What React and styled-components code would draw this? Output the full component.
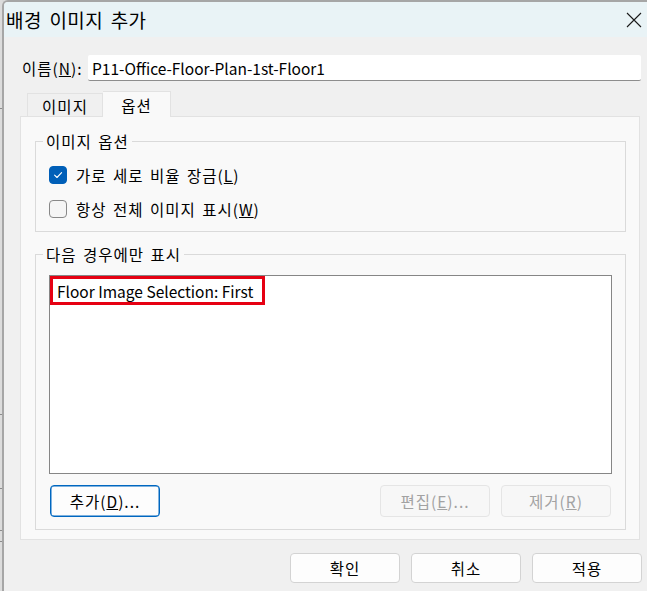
import React from 'react';
import styled, { createGlobalStyle } from 'styled-components';

const GlobalStyle = createGlobalStyle`
  html, body {
    margin: 0;
    padding: 0;
    background: #d9d9d9;
  }
  body {
    font-family: "Noto Sans CJK KR", "Noto Sans", sans-serif;
    color: #000;
  }
  * {
    box-sizing: border-box;
  }
`;

// ===== Frame =====
const Screen = styled.div`
  display: flex;
  width: 647px;
  height: 591px;
  overflow: hidden;
  background: #d9d9d9;
`;

// sliver of the window that sits behind the dialog
const BackStrip = styled.div`
  flex: none;
  width: 2px;
  background-color: #dcdcdc;
  background-image:
    linear-gradient(#8c8c8c, #8c8c8c),
    linear-gradient(#8c8c8c, #8c8c8c),
    linear-gradient(#8c8c8c, #8c8c8c),
    linear-gradient(#8c8c8c, #8c8c8c),
    linear-gradient(#8c8c8c, #8c8c8c);
  background-repeat: no-repeat;
  background-size: 2px 1px;
  background-position: 0 108px, 0 414px, 0 488px, 0 530px, 0 541px;
`;

const Dialog = styled.div`
  flex: 1;
  display: flex;
  flex-direction: column;
  border-left: 2px solid #a6a6a6;
  border-top: 2px solid #a6a6a6;
  border-top-left-radius: 6px;
  background: #f0f0f0;
  overflow: hidden;
`;

const TitleBar = styled.div`
  flex: none;
  height: 35px;
  display: flex;
  align-items: center;
  justify-content: space-between;
  padding: 0 5px 0 2px;
  background: #e9f3f6;
`;

const Title = styled.div`
  font-size: 19px;
  letter-spacing: 0.4px;
  word-spacing: 3px;
  line-height: 1;
`;

const CloseButton = styled.button`
  appearance: none;
  border: 0;
  background: transparent;
  padding: 0;
  width: 16px;
  height: 16px;
  display: grid;
  place-items: center;
`;

const Body = styled.div`
  display: flex;
  flex-direction: column;
  padding: 18px 6px 0 16px;
`;

// Korean UI labels are set a little looser, like the system font
const Text = styled.span`
  font-size: 15.5px;
  letter-spacing: 1px;
  word-spacing: 2px;
  white-space: nowrap;
`;

// ===== Name field =====
const NameRow = styled.div`
  display: flex;
  align-items: center;
  height: 26px;
  padding-left: 2px;
`;

const NameLabel = styled.label`
  flex: none;
  width: 66px;
`;

const TextInput = styled.input`
  flex: 1;
  min-width: 0;
  height: 26px;
  border: 0;
  border-bottom: 1px solid #8d8d8d;
  border-radius: 2px;
  background: #fff;
  padding: 0 4px;
  font-family: inherit;
  font-size: 15.5px;
  color: #000;
  outline: none;
`;

// ===== Tabs =====
const TabStrip = styled.div`
  display: flex;
  align-items: flex-start;
  height: 26px;
  margin-top: 10px;
  margin-bottom: -1px;
  padding-left: 7px;
  position: relative;
  z-index: 1;
`;

const Tab = styled.div`
  width: ${p => p.$w}px;
  height: ${p => (p.$active ? 26 : 24)}px;
  margin-top: ${p => (p.$active ? 0 : 2)}px;
  display: flex;
  align-items: center;
  justify-content: center;
  background: ${p => (p.$active ? '#f9f9f9' : '#f0f0f0')};
  border: 1px solid #e2e2e2;
  border-bottom: ${p => (p.$active ? '0' : '1px solid #e2e2e2')};
  border-left: ${p => (p.$active ? '0' : '1px solid #e2e2e2')};
  padding-top: ${p => (p.$active ? 0 : 1)}px;
`;

const TabPanel = styled.div`
  display: flex;
  flex-direction: column;
  margin-right: 1px;
  padding: 14px 13px 9px 14px;
  background: #f9f9f9;
  border: 1px solid #e2e2e2;
`;

// ===== Group boxes =====
const GroupBox = styled.fieldset`
  margin: ${p => p.$mt || 0}px 0 0 0;
  padding: ${p => p.$pad};
  border: 1px solid #dadada;
  min-width: 0;
`;

const Legend = styled.legend`
  margin-left: -6px;
  padding: 0 3px;
  line-height: 20px;
`;

const CheckRow = styled.label`
  display: flex;
  align-items: center;
  gap: 9px;
  height: 34px;
`;

const CheckBox = styled.span`
  flex: none;
  width: 18px;
  height: 18px;
  border-radius: 4px;
  display: grid;
  place-items: center;
  background: ${p => (p.$checked ? '#005fb8' : '#f5f5f5')};
  border: 1px solid ${p => (p.$checked ? '#005fb8' : '#888888')};
`;

const ListBox = styled.div`
  height: 199px;
  background: #fff;
  border: 1px solid #868686;
`;

const ListItem = styled.div`
  width: 215px;
  height: 29px;
  display: flex;
  align-items: center;
  padding-left: 4px;
  border: 3px solid #e60012;
  font-size: 15.5px;
`;

// ===== Buttons =====
const ButtonRow = styled.div`
  display: flex;
  gap: 11px;
  margin-top: 11px;
  padding: 0 1px;
`;

const Button = styled.button`
  appearance: none;
  flex: none;
  width: 110px;
  height: ${p => p.$h || 32}px;
  border-radius: 4px;
  font-family: inherit;
  padding: 0;
  background: ${p => (p.$disabled ? '#f7f7f7' : '#fdfdfd')};
  color: ${p => (p.$disabled ? '#a2a2a2' : '#000')};
  border: 1px solid ${p => (p.$primary ? '#0067c0' : p.$disabled ? '#e5e5e5' : '#d3d3d3')};
  box-shadow: ${p => (p.$primary ? 'inset 0 0 0 0.5px #0067c0' : 'none')};
`;

const Spacer = styled.div`
  flex: 1;
`;

const Footer = styled.div`
  display: flex;
  justify-content: flex-end;
  gap: 11px;
  margin-top: 13px;
  margin-right: -1px;
`;

function CheckIcon() {
  return (
    <svg width="12" height="12" viewBox="0 0 12 12" fill="none">
      <path d="M2.6 6.2 L5 8.5 L9.6 3.6" stroke="#fff" strokeWidth="1.1" strokeLinecap="round" strokeLinejoin="round" />
    </svg>
  );
}

function CloseIcon() {
  return (
    <svg width="16" height="16" viewBox="0 0 16 16" fill="none">
      <path d="M1 1 L15 15 M15 1 L1 15" stroke="#1a1a1a" strokeWidth="1.1" />
    </svg>
  );
}

export default function App() {
  return (
    <Screen>
      <GlobalStyle />
      <BackStrip />
      <Dialog>
        <TitleBar>
          <Title>배경 이미지 추가</Title>
          <CloseButton aria-label="닫기">
            <CloseIcon />
          </CloseButton>
        </TitleBar>

        <Body>
          <NameRow>
            <NameLabel>
              <Text>이름(<u>N</u>):</Text>
            </NameLabel>
            <TextInput defaultValue="P11-Office-Floor-Plan-1st-Floor1" />
          </NameRow>

          <TabStrip>
            <Tab $w={76}><Text>이미지</Text></Tab>
            <Tab $w={68} $active><Text>옵션</Text></Tab>
          </TabStrip>

          <TabPanel>
            <GroupBox $pad="7px 13px 5px 13px">
              <Legend><Text>이미지 옵션</Text></Legend>
              <CheckRow>
                <CheckBox $checked>
                  <CheckIcon />
                </CheckBox>
                <Text>가로 세로 비율 장금(<u>L</u>)</Text>
              </CheckRow>
              <CheckRow>
                <CheckBox />
                <Text>항상 전체 이미지 표시(<u>W</u>)</Text>
              </CheckRow>
            </GroupBox>

            <GroupBox $mt={12} $pad="11px 13px 12px 13px">
              <Legend><Text>다음 경우에만 표시</Text></Legend>
              <ListBox>
                <ListItem>Floor Image Selection: First</ListItem>
              </ListBox>
              <ButtonRow>
                <Button $primary><Text>추가(<u>D</u>)...</Text></Button>
                <Spacer />
                <Button $disabled><Text>편집(<u>E</u>)...</Text></Button>
                <Button $disabled><Text>제거(<u>R</u>)</Text></Button>
              </ButtonRow>
            </GroupBox>
          </TabPanel>

          <Footer>
            <Button $h={30}><Text>확인</Text></Button>
            <Button $h={30}><Text>취소</Text></Button>
            <Button $h={30}><Text>적용</Text></Button>
          </Footer>
        </Body>
      </Dialog>
    </Screen>
  );
}
